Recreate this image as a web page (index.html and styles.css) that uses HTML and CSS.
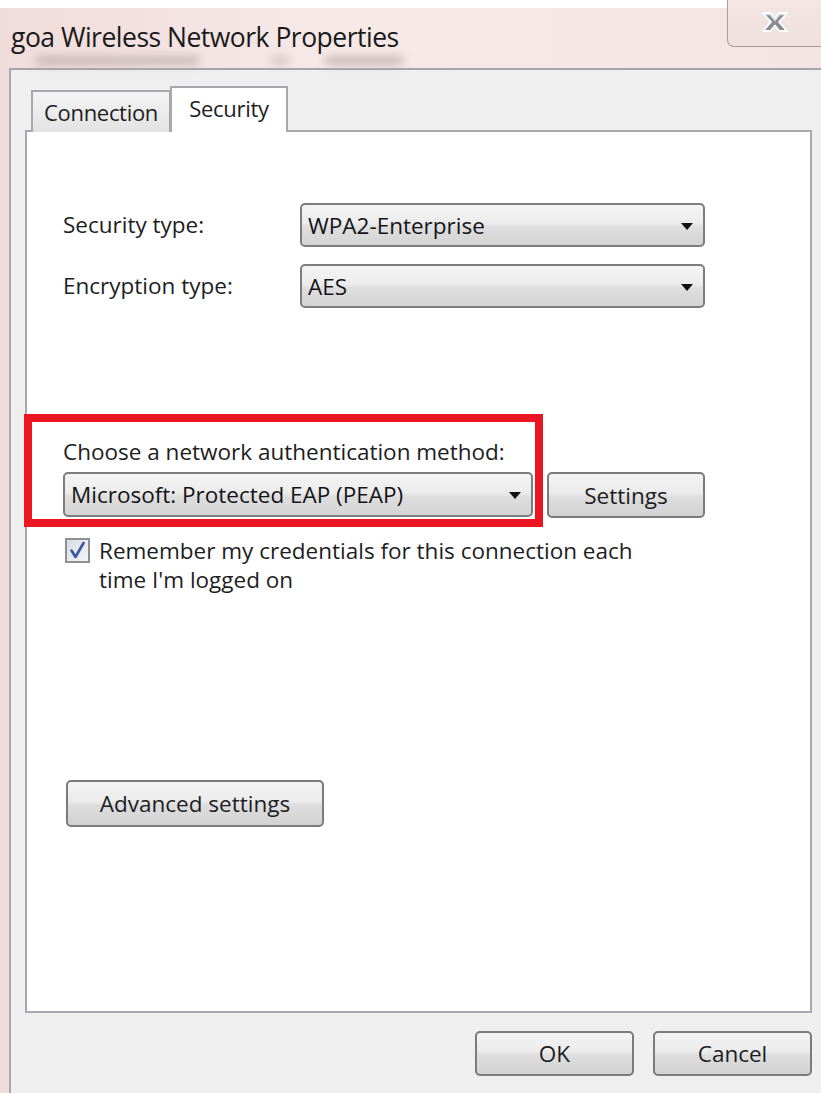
FILE: index.html
```html
<!DOCTYPE html>
<html lang="en">
<head>
<meta charset="utf-8">
<title>goa Wireless Network Properties</title>
<link rel="stylesheet" href="styles.css">
</head>
<body>
<div class="window">
  <div class="titlebar">
    <div class="title-wrap">
      <div class="title">goa Wireless Network Properties</div>
      <div class="behind" aria-hidden="true"><i class="smudge s1"></i><i class="smudge s2"></i><i class="smudge s3"></i></div>
    </div>
    <button class="close" aria-label="Close">
      <svg width="30" height="22" viewBox="0 0 30 22">
        <path d="M3 2 L10.5 2 L15 7.5 L19.5 2 L27 2 L19 11 L27 20 L19.5 20 L15 14.5 L10.5 20 L3 20 L11 11 Z" fill="#8a8c94" stroke="#ffffff" stroke-width="1.8" stroke-linejoin="round"/>
        <path d="M5.5 3.6 L10 3.6 L15 9.6 L20 3.6 L24.5 3.6" fill="none" stroke="#dcdee3" stroke-width="1.1"/>
      </svg>
    </button>
  </div>

  <div class="client">
    <div class="tabs">
      <div class="tab">Connection</div>
      <div class="tab tab-active">Security</div>
    </div>

    <div class="panel">
      <div class="form-grid">
        <label class="label">Security type:</label>
        <div class="combo"><span>WPA2-Enterprise</span><i class="arrow"></i></div>
        <label class="label">Encryption type:</label>
        <div class="combo"><span>AES</span><i class="arrow"></i></div>
      </div>

      <div class="auth">
        <div class="label">Choose a network authentication method:</div>
        <div class="auth-row">
          <div class="combo combo-wide"><span>Microsoft: Protected EAP (PEAP)</span><i class="arrow"></i></div>
          <button class="btn btn-settings">Settings</button>
        </div>
        <div class="check-row">
          <span class="checkbox">
            <svg width="21" height="21" viewBox="0 0 21 21">
              <path d="M4.5 10.5 L8.5 17 L16.5 3" fill="none" stroke="#3d57a8" stroke-width="2.6" stroke-linecap="round" stroke-linejoin="round"/>
            </svg>
          </span>
          <span class="check-text">Remember my credentials for this connection each<br>time I'm logged on</span>
        </div>
      </div>

      <button class="btn btn-advanced">Advanced settings</button>
    </div>

    <div class="footer">
      <button class="btn btn-footer">OK</button>
      <button class="btn btn-footer">Cancel</button>
    </div>
  </div>

  <div class="highlight"></div>
</div>
</body>
</html>
```

FILE: styles.css
```css
* { box-sizing: border-box; }

html, body {
  margin: 0;
  padding: 0;
  background: #ffffff;
}

body {
  font-family: "Open Sans", "Noto Sans", "Liberation Sans", sans-serif;
  color: #1d1d22;
  overflow: hidden;
}

.window {
  position: relative;
  width: 821px;
  height: 1093px;
  background:
    linear-gradient(to bottom, #ffffff 0, #ffffff 8px, transparent 8px),
    linear-gradient(to right, #f0dcdb, #f6e9e8 40%, #f3e5e4);
  display: flex;
  flex-direction: column;
}

/* ---- title bar ---- */
.titlebar {
  height: 68px;
  display: flex;
  justify-content: space-between;
  align-items: flex-start;
}

.title-wrap {
  padding: 18px 0 0 11px;
}

.title {
  font-size: 26.5px;
  line-height: 38px;
  letter-spacing: -0.5px;
  color: #1a1a1a;
}

/* faint shapes of the window behind, seen through the glass frame */
.behind {
  display: flex;
  gap: 10px;
  margin: 0 0 0 24px;
  height: 10px;
  filter: blur(4px);
  opacity: 0.7;
}

.smudge {
  display: block;
  height: 9px;
  background: #b8a8a9;
  border-radius: 5px;
}
.s1 { width: 165px; }
.s2 { width: 20px; margin-left: 60px; background: #cbbcbd; }
.s3 { width: 80px; margin-left: 24px; }

.close {
  width: 96px;
  height: 47px;
  margin-right: -2px;
  padding: 0 0 2px 0;
  border: 1px solid #a99e9e;
  border-top: none;
  border-radius: 0 0 0 7px;
  background: linear-gradient(to bottom, #f3e6e5, #efe0df);
  display: flex;
  align-items: center;
  justify-content: center;
}

/* ---- client area ---- */
.client {
  flex: 1;
  margin-left: 9px;
  border-left: 2px solid #a9a7ae;
  border-top: 2px solid #a7a3a6;
  background: #efefef;
  padding: 16px 9px 0 14px;
  display: flex;
  flex-direction: column;
}

.tabs {
  display: flex;
  align-items: flex-end;
  padding-left: 6px;
  margin-bottom: -2px;
  position: relative;
  z-index: 1;
}

.tab {
  height: 42px;
  width: 140px;
  padding: 0;
  font-size: 22px;
  line-height: 40px;
  letter-spacing: -0.3px;
  border: 2px solid #a8a8ac;
  border-bottom: none;
  background: linear-gradient(to bottom, #f4f4f4, #e3e3e3);
  text-align: center;
}

.tab-active {
  height: 46px;
  width: 118px;
  margin-left: -1px;
  background: #ffffff;
  line-height: 40px;
  padding-bottom: 4px;
}

.panel {
  height: 883px;
  width: 787px;
  border: 2px solid #a8a8ae;
  background: #ffffff;
  padding: 71px 0 0 36px;
}

.label {
  font-size: 22.5px;
  line-height: 30px;
  color: #1d1d22;
}

.form-grid {
  display: grid;
  grid-template-columns: 237px 405px;
  grid-auto-rows: 44px;
  row-gap: 17px;
  align-items: center;
}

.combo {
  height: 44px;
  border: 2px solid #7d7d80;
  border-radius: 5px;
  background: linear-gradient(to bottom, #f4f4f4 0%, #ececec 45%, #dedede 55%, #d4d4d4 100%);
  display: flex;
  align-items: center;
  justify-content: space-between;
  padding: 0 10px 0 6px;
  font-size: 22.5px;
  color: #141418;
}

.arrow {
  width: 0;
  height: 0;
  border-left: 6px solid transparent;
  border-right: 6px solid transparent;
  border-top: 7px solid #111;
  margin-top: 2px;
}

.auth {
  margin-top: 129px;
}

.auth-row {
  display: flex;
  gap: 14px;
  margin-top: 5px;
}

.combo-wide {
  width: 470px;
  height: 45px;
}

.btn {
  font-family: inherit;
  font-size: 22.5px;
  color: #1d1d24;
  border: 2px solid #7b7b7e;
  border-radius: 5px;
  background: linear-gradient(to bottom, #f3f3f3 0%, #ebebeb 45%, #dddddd 55%, #d2d2d2 100%);
  padding: 0;
  height: 45px;
}

.btn-settings {
  width: 158px;
  height: 46px;
}

.check-row {
  display: flex;
  align-items: flex-start;
  margin-top: 18px;
  padding-left: 2px;
}

.checkbox {
  width: 25px;
  height: 25px;
  flex: none;
  border: 2px solid #8f9093;
  background: linear-gradient(135deg, #d9dde4, #f4f5f7);
  display: flex;
  align-items: center;
  justify-content: center;
  margin-top: 2px;
}

.check-text {
  margin-left: 9px;
  font-size: 22.5px;
  line-height: 29px;
}

.btn-advanced {
  display: block;
  width: 258px;
  height: 47px;
  margin: 186px 0 0 3px;
}

.footer {
  display: flex;
  justify-content: flex-end;
  gap: 19px;
  width: 787px;
  margin-top: 18px;
}

.btn-footer {
  width: 159px;
  height: 45px;
}

/* red annotation frame drawn over the dialog */
.highlight {
  position: absolute;
  left: 24px;
  top: 414px;
  width: 519px;
  height: 113px;
  border: 8px solid #ea1621;
  pointer-events: none;
}
```
